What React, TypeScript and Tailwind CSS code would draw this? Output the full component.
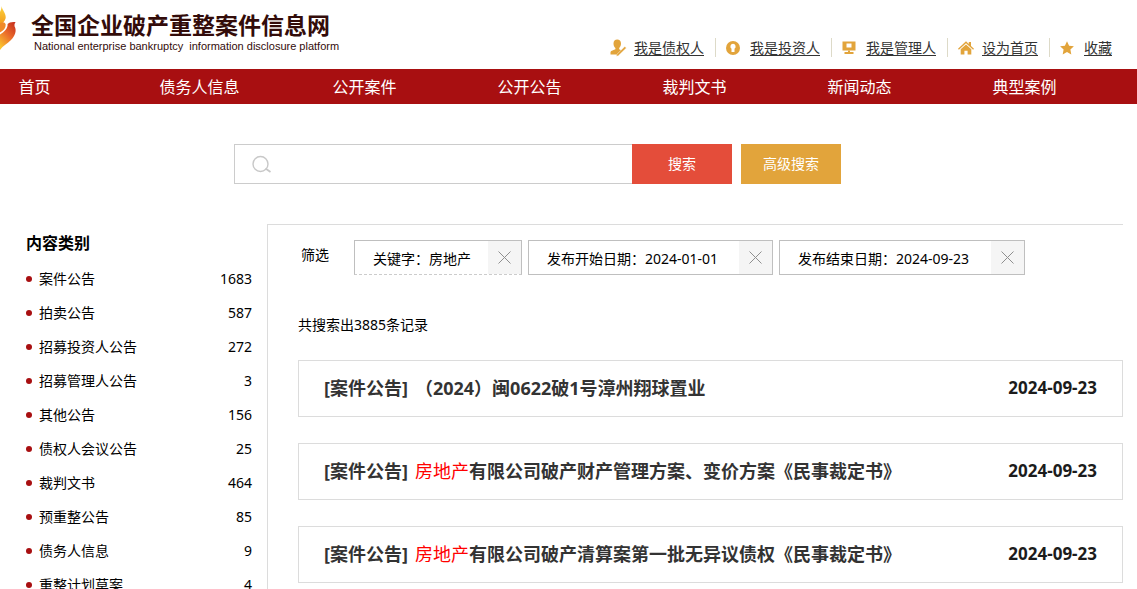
import React from "react";

const navItems = ["首页", "债务人信息", "公开案件", "公开公告", "裁判文书", "新闻动态", "典型案例"];

const categories = [
  { name: "案件公告", count: 1683 },
  { name: "拍卖公告", count: 587 },
  { name: "招募投资人公告", count: 272 },
  { name: "招募管理人公告", count: 3 },
  { name: "其他公告", count: 156 },
  { name: "债权人会议公告", count: 25 },
  { name: "裁判文书", count: 464 },
  { name: "预重整公告", count: 85 },
  { name: "债务人信息", count: 9 },
  { name: "重整计划草案", count: 4 },
];

const filters = [
  { text: "关键字：房地产", box: "w-[168px] border-b-[#cccccc] [border-bottom-style:dashed]" },
  { text: "发布开始日期：2024-01-01", box: "w-[245px]" },
  { text: "发布结束日期：2024-09-23", box: "w-[246px]" },
];

const results = [
  { keyword: "", title: "（2024）闽0622破1号漳州翔球置业", date: "2024-09-23" },
  { keyword: "房地产", title: "有限公司破产财产管理方案、变价方案《民事裁定书》", date: "2024-09-23" },
  { keyword: "房地产", title: "有限公司破产清算案第一批无异议债权《民事裁定书》", date: "2024-09-23" },
];

function FlameLogo() {
  return (
    <svg className="h-[48px] w-[17px] shrink-0" viewBox="0 0 17 48" aria-hidden="true">
      <defs>
        <linearGradient id="flameTip" x1="0" y1="0" x2="0" y2="1">
          <stop offset="0" stopColor="#fbd23a" />
          <stop offset="1" stopColor="#f39a1d" />
        </linearGradient>
        <linearGradient id="flameWing" x1="0.8" y1="0" x2="0.2" y2="1">
          <stop offset="0" stopColor="#c9341f" />
          <stop offset="0.45" stopColor="#ea6a2a" />
          <stop offset="1" stopColor="#fbc52f" />
        </linearGradient>
      </defs>
      <path d="M1.600 2C2 6 6.200 9.500 5.700 14C5.300 17 2.500 19 0 21V8C1 6 1.600 4 1.600 2Z" fill="url(#flameTip)" />
      <path d="M0 19.500C2.500 17.500 5 18 5.600 20.500C6 24 3 27 0 28.500Z" fill="#f08a2a" />
      <path d="M15.600 18C12 17.600 9 18.200 7.600 20C8 24.500 4 28 0 30.500V46C3 41.500 7.500 39.500 11 36C15 32 17 26.500 14.600 22.500C14.200 20.500 14.700 19.200 15.600 18Z" fill="url(#flameWing)" />
    </svg>
  );
}

function CreditorIcon() {
  return (
    <svg className="h-[18px] w-[17px]" viewBox="0 0 17 18" aria-hidden="true">
      <path
        d="M3.500 4.500C3.500 2 5 .5 7.200 .5S11 2 11 4.500C11 6.500 10 8 9.200 9V10.300L11.200 11.200L7 15.500H.5V13.300C.5 12.200 1.500 11.700 3 11.200L5.400 10.300V9C4.300 8 3.500 6.500 3.500 4.500Z"
        fill="#e2a43b"
      />
      <path d="M14.800 7.500L16.300 9L8.300 16.700L6.300 17.300L6.900 15.300Z" fill="#e2a43b" stroke="#fff" strokeWidth="0.400" />
    </svg>
  );
}

function InvestorIcon() {
  return (
    <svg className="h-[14px] w-[14px]" viewBox="0 0 14 14" aria-hidden="true">
      <circle cx="7" cy="7" r="7" fill="#e2a43b" />
      <path d="M7 2.800A2.700 2.700 0 0 0 5.500 7.700V11H8.500V7.700A2.700 2.700 0 0 0 7 2.800Z" fill="#fff" />
    </svg>
  );
}

function ManagerIcon() {
  return (
    <svg className="h-[14px] w-[14px]" viewBox="0 0 14 14" aria-hidden="true">
      <path fillRule="evenodd" d="M.5 .5H13.500V9.500H.5ZM4.500 2.500V6.500H9.500V2.500Z" fill="#e2a43b" />
      <path d="M6 9.500H8V11H11.500V13H2.500V11H6Z" fill="#e2a43b" />
    </svg>
  );
}

function HomeIcon() {
  return (
    <svg className="h-[14px] w-[16px]" viewBox="0 0 16 14" fill="#e2a43b" aria-hidden="true">
      <path d="M8 .3L10.800 2.900V1H13V5L16 7.800L15.100 8.800L8 2.300L.9 8.800L0 7.800Z" />
      <path d="M8 3.400L13.300 8.200V13.500H9.600V9.800H6.400V13.500H2.700V8.200Z" />
    </svg>
  );
}

function StarIcon() {
  return (
    <svg className="h-[14px] w-[14px]" viewBox="0 0 14 14" fill="#e2a43b" aria-hidden="true">
      <path d="M7 .3L9.100 4.700L13.900 5.300L10.400 8.600L11.300 13.400L7 11.100L2.700 13.400L3.600 8.600L.1 5.300L4.900 4.700Z" />
    </svg>
  );
}

const quickLinks = [
  { label: "我是债权人", Icon: CreditorIcon },
  { label: "我是投资人", Icon: InvestorIcon },
  { label: "我是管理人", Icon: ManagerIcon },
  { label: "设为首页", Icon: HomeIcon },
  { label: "收藏", Icon: StarIcon },
];

function Header() {
  return (
    <header className="flex h-[69px] items-start justify-between">
      <a href="#" className="flex items-start pt-1">
        <FlameLogo />
        <span className="flex flex-col pt-[7px] pl-[14px] text-[#330c0a]">
          <span className="text-[23px] leading-7 font-bold whitespace-nowrap">全国企业破产重整案件信息网</span>
          <span className="pl-[3px] font-['Liberation_Sans',Arial,sans-serif] text-[11px] leading-[14px] whitespace-pre">
            National enterprise bankruptcy  information disclosure platform
          </span>
        </span>
      </a>
      <ul className="flex pt-[38px] pr-[25px] text-sm text-[#333]">
        {quickLinks.map(({ label, Icon }, i) => (
          <li
            key={label}
            className={
              i < quickLinks.length - 1
                ? "mr-[10px] flex h-[19px] items-center border-r border-[#dddac8] pr-[11px]"
                : "flex h-[19px] items-center"
            }
          >
            <span className="flex w-6 shrink-0 items-center">
              <Icon />
            </span>
            <a href="#" className="leading-5 whitespace-nowrap underline underline-offset-2">
              {label}
            </a>
          </li>
        ))}
      </ul>
    </header>
  );
}

function Nav() {
  return (
    <nav className="overflow-hidden bg-[#a80f11]">
      <ul className="-ml-12 mr-[30px] grid grid-cols-7 pt-px text-center text-base leading-[34px] text-white">
        {navItems.map((item) => (
          <li key={item}>
            <a href="#" className="block whitespace-nowrap">
              {item}
            </a>
          </li>
        ))}
      </ul>
    </nav>
  );
}

function SearchBar() {
  return (
    <form className="flex h-10 justify-center pr-[62px] text-sm" onSubmit={(e) => e.preventDefault()}>
      <label className="flex w-[398px] items-center border border-r-0 border-[#cccccc] pl-[17px]">
        <svg className="h-[18px] w-5 shrink-0" viewBox="0 0 20 18" fill="none" stroke="#c8c8c8" strokeWidth="1.4" aria-hidden="true">
          <circle cx="8.500" cy="9" r="7.500" />
          <path d="M13.500 13.500L18.500 17" strokeWidth="1.800" />
        </svg>
        <input type="text" aria-label="搜索" className="h-full min-w-0 flex-1 px-3 outline-none" />
      </label>
      <button type="submit" className="w-[100px] bg-[#e44d3a] text-white">
        搜索
      </button>
      <button type="button" className="ml-[9px] w-[100px] bg-[#e2a43b] text-white">
        高级搜索
      </button>
    </form>
  );
}

function Sidebar() {
  return (
    <aside className="w-[267px] shrink-0 pt-1 pr-[15px] pl-[26px]">
      <h2 className="pb-1 text-base leading-[30px] font-bold">内容类别</h2>
      <ul className="text-sm leading-[34px]">
        {categories.map((c) => (
          <li key={c.name}>
            <a href="#" className="flex items-center">
              <span className="mr-[7px] h-[6px] w-[6px] rounded-full bg-[#a80f11]" />
              <span className="flex-1">{c.name}</span>
              <span>{c.count}</span>
            </a>
          </li>
        ))}
      </ul>
    </aside>
  );
}

function Results() {
  return (
    <main className="mr-[14px] min-w-0 flex-1 border-t border-l border-[#dcdcdc] pl-[30px]">
      <div className="flex pt-[15px] pl-[3px] text-sm">
        <span className="w-[53px] shrink-0 leading-[30px]">筛选</span>
        <ul className="flex gap-[6px]">
          {filters.map((f) => (
            <li key={f.text} className={`flex h-[35px] border border-[#bfbfbf] ${f.box}`}>
              <span className="flex-1 pl-[18px] leading-[35px] whitespace-nowrap">{f.text}</span>
              <button type="button" aria-label="移除" className="flex w-[33px] items-center justify-center bg-[#f5f5f5]">
                <svg className="h-[13px] w-[13px]" viewBox="0 0 13 13" stroke="#8f8f8f" strokeWidth="1" aria-hidden="true">
                  <path d="M.5 .5L12.500 12.500M12.500 .5L.5 12.500" />
                </svg>
              </button>
            </li>
          ))}
        </ul>
      </div>
      <p className="pt-10 pb-[25px] text-sm leading-5">共搜索出3885条记录</p>
      <ul className="flex flex-col gap-[26px]">
        {results.map((r) => (
          <li key={r.title} className="flex h-[57px] items-center justify-between border border-[#dcdcdc] px-[25px] pb-[2px] font-bold">
            <a href="#" className="flex text-lg leading-6 text-[#333]">
              <span className="mr-[7px]">[案件公告]</span>
              {r.keyword && <span className="font-normal text-[#ff0000]">{r.keyword}</span>}
              <span>{r.title}</span>
            </a>
            <time className="text-[17px] leading-6 text-[#1c1c1c]">{r.date}</time>
          </li>
        ))}
      </ul>
    </main>
  );
}

export default function App() {
  return (
    <div className="h-screen overflow-hidden bg-white font-['Noto_Sans','Noto_Sans_CJK_SC',sans-serif] text-black">
      <Header />
      <Nav />
      <div className="py-10">
        <SearchBar />
      </div>
      <div className="flex">
        <Sidebar />
        <Results />
      </div>
    </div>
  );
}
